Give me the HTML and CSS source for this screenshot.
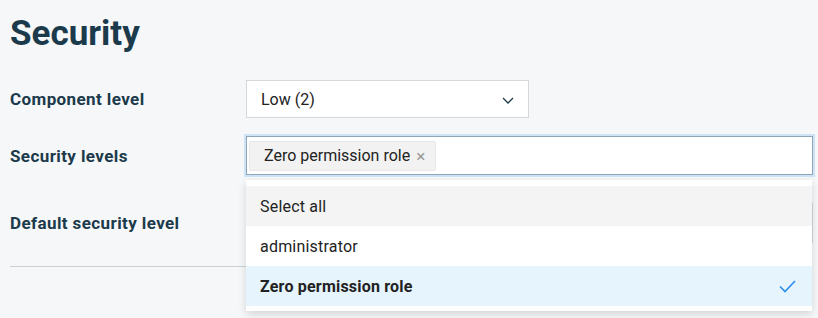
FILE: index.html
```html
<!DOCTYPE html>
<html lang="en">
<head>
  <meta charset="UTF-8">
  <meta name="viewport" content="width=device-width, initial-scale=1.0">
  <title>Security</title>
  <link rel="stylesheet" href="styles.css">
</head>
<body>
  <div class="page">
    <h1>Security</h1>

    <div class="form">
      <label class="label">Component level</label>
      <div class="select">
        <span>Low (2)</span>
        <svg class="chevron" width="14" height="9" viewBox="0 0 14 9">
          <path d="M2 2 L7 7 L12 2" fill="none" stroke="#1e3a4a" stroke-width="1.3"/>
        </svg>
      </div>

      <label class="label">Security levels</label>
      <div class="multi">
        <div class="multi-input">
          <span class="tag">Zero permission role <span class="tag-remove">&times;</span></span>
        </div>
        <ul class="menu">
          <li class="option hover">Select all</li>
          <li class="option">administrator</li>
          <li class="option selected">
            Zero permission role
            <svg class="check" width="17" height="13" viewBox="0 0 17 13">
              <path d="M1 6.5 L6 11.5 L16 1" fill="none" stroke="#2b8ef0" stroke-width="1.6"/>
            </svg>
          </li>
        </ul>
      </div>

      <label class="label last">Default security level</label>
      <div class="select wide last"></div>
    </div>

    <hr class="divider">
  </div>
</body>
</html>
```

FILE: styles.css
```css
html, body {
  min-height: 100vh;
}
body {
  font-family: Roboto, 'Noto Sans', sans-serif;
  background-color: #f6f7f9;
  margin: 0;
  padding: 0;
  color: #1b3a4b;
}
.page {
  padding: 12px 10px 0 10px;
}
h1 {
  font-size: 35px;
  font-weight: 700;
  margin: 0 0 24px 0;
  line-height: 44px;
}
.form {
  display: grid;
  grid-template-columns: 236px 567px;
  row-gap: 18px;
  align-items: center;
}
.label {
  font-size: 17px;
  font-weight: 700;
  letter-spacing: 0.4px;
  color: #1b3a4b;
}
.last {
  margin-top: 10px;
}
.select {
  width: 283px;
  height: 38px;
  box-sizing: border-box;
  background-color: white;
  border: 1px solid #d4d8db;
  display: flex;
  align-items: center;
  justify-content: space-between;
  padding: 0 13px 0 14px;
  font-size: 16px;
  color: #222;
}
.select.wide {
  width: 567px;
  height: 40px;
}
.chevron {
  margin-top: 2px;
}
.multi {
  position: relative;
}
.multi-input {
  height: 39px;
  box-sizing: border-box;
  background-color: white;
  border: 1px solid #8fa6b8;
  box-shadow: 0 0 0 2px #cfe3f7;
  display: flex;
  align-items: center;
  padding: 0 2px;
}
.tag {
  display: inline-flex;
  align-items: center;
  height: 30px;
  box-sizing: border-box;
  padding: 0 10px 0 14px;
  background-color: #f2f2f2;
  border: 1px solid #e8e8e8;
  border-radius: 2px;
  font-size: 16px;
  color: #222;
}
.tag-remove {
  color: #999;
  font-size: 17px;
  margin-left: 6px;
}
.menu {
  position: absolute;
  top: 44px;
  left: 0;
  right: 1px;
  margin: 0;
  padding: 6px 0 5px 0;
  list-style: none;
  background-color: white;
  box-shadow: 0 3px 8px rgba(0, 0, 0, 0.14);
  z-index: 2;
}
.option {
  height: 40px;
  display: flex;
  align-items: center;
  justify-content: space-between;
  padding: 0 16px 0 14px;
  font-size: 16px;
  letter-spacing: 0.2px;
  color: #222;
}
.option.hover {
  background-color: #f4f4f4;
}
.option.selected {
  background-color: #e5f4fd;
  font-weight: 700;
}
.divider {
  border: none;
  border-top: 1px solid #c8d0d5;
  margin: 23px 0 0 0;
}
```
